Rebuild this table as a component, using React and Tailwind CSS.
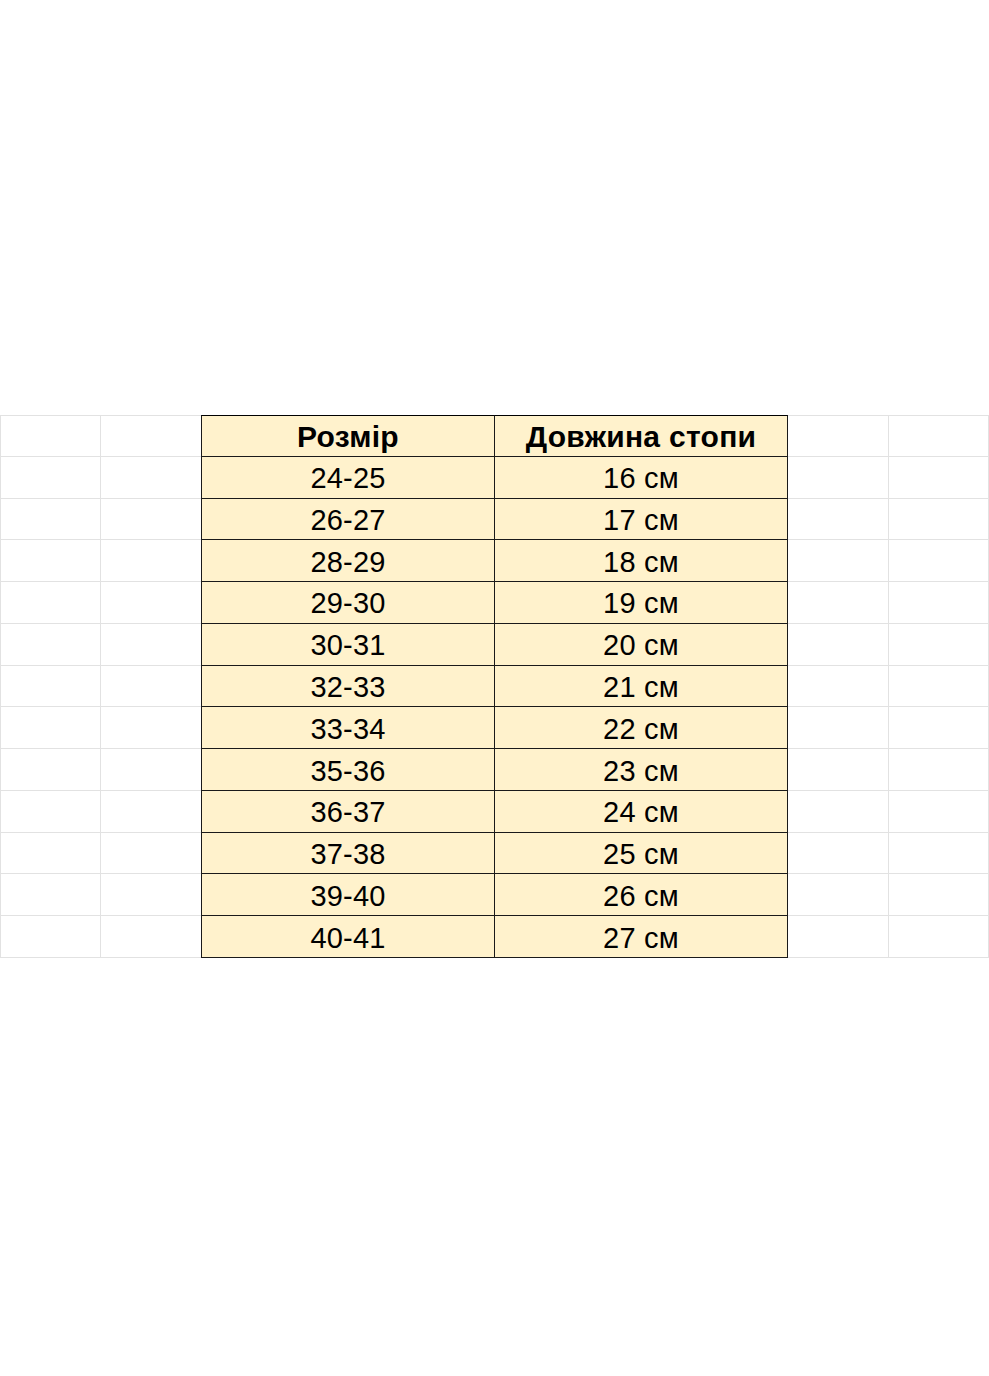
const rows = [
  ["24-25", "16 см"],
  ["26-27", "17 см"],
  ["28-29", "18 см"],
  ["29-30", "19 см"],
  ["30-31", "20 см"],
  ["32-33", "21 см"],
  ["33-34", "22 см"],
  ["35-36", "23 см"],
  ["36-37", "24 см"],
  ["37-38", "25 см"],
  ["39-40", "26 см"],
  ["40-41", "27 см"],
];

function Row({ a, b, header, first }) {
  const g = first ? "border-t border-t-[#e2e2e2]" : "";
  const k = first ? "border-t border-t-black" : "";
  const txt = header ? "font-bold text-[30px] tracking-[0.3px] pt-[2px]" : "text-[29px] tracking-[0.2px] pt-[3px]";
  return (
    <div className="flex h-[41.77px]">
      <div className={`w-[101px] shrink-0 border-l border-r border-b border-[#e2e2e2] ${g}`} />
      <div className={`w-[100px] shrink-0 border-b border-[#e2e2e2] ${g}`} />
      <div
        className={`w-[294px] shrink-0 flex items-center justify-center bg-[#fff2cc] border-l border-r border-b border-[#1a1a1a] ${k} ${txt}`}
      >
        {a}
      </div>
      <div
        className={`w-[293px] shrink-0 flex items-center justify-center bg-[#fff2cc] border-r border-b border-[#1a1a1a] ${k} ${txt}`}
      >
        {b}
      </div>
      <div className={`w-[101px] shrink-0 border-r border-b border-[#e2e2e2] ${g}`} />
      <div className={`w-[100px] shrink-0 border-r border-b border-[#e2e2e2] ${g}`} />
    </div>
  );
}

export default function App() {
  return (
    <div
      className="w-[989px] h-[1376px] bg-white pt-[415px] text-black leading-none"
      style={{ fontFamily: '"Liberation Sans", Arial, sans-serif' }}
    >
      <Row a="Розмір" b="Довжина стопи" header first />
      {rows.map((r) => (
        <Row key={r[0]} a={r[0]} b={r[1]} />
      ))}
    </div>
  );
}
